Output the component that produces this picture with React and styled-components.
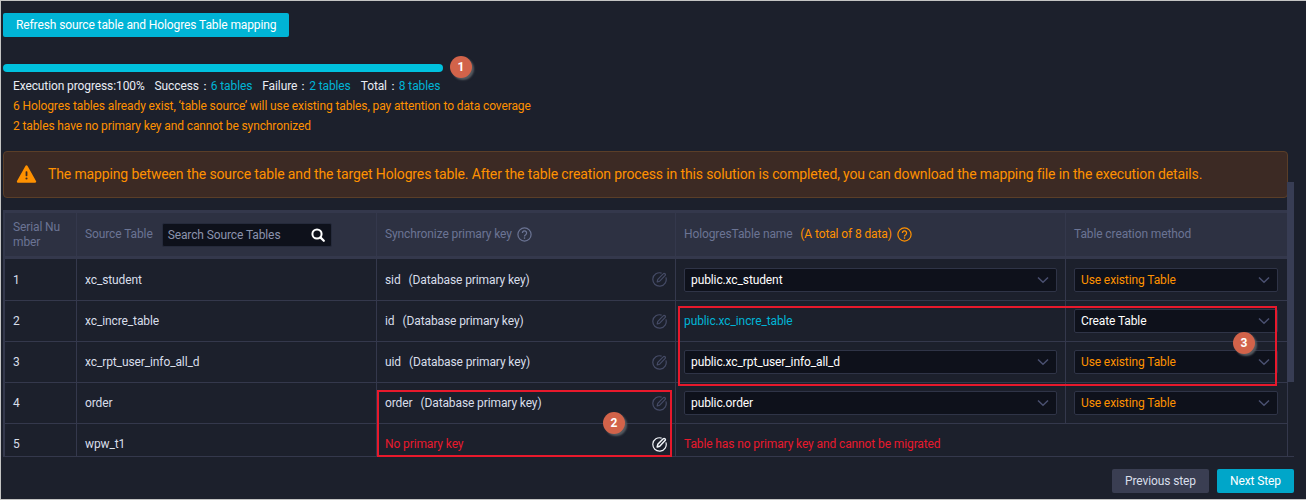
import React from "react";
import styled, { createGlobalStyle } from "styled-components";

const Global = createGlobalStyle`
  html, body { margin: 0; padding: 0; background: #1c202c; }
  * { box-sizing: border-box; }
`;

const Page = styled.div`
  position: relative;
  width: 1306px;
  height: 500px;
  overflow: hidden;
  background: #1c202c;
  border-left: 1px solid #c4c4c4;
  border-top: 1px solid #c4c4c4;
  border-bottom: 1px solid #c4c4c4;
  padding: 12px 12px 0 2px;
  font-family: Roboto, "Liberation Sans", sans-serif;
  font-size: 12px;
  letter-spacing: -0.11px;
  color: #d8deea;
`;

const PrimaryButton = styled.button`
  display: block;
  height: 24px;
  padding: 0 13px;
  border: 0;
  border-radius: 2px;
  background: #00b4d6;
  color: #fff;
  font: inherit;
  letter-spacing: inherit;
  white-space: nowrap;
`;

const Progress = styled.div`
  width: 440px;
  height: 8px;
  margin-top: 27px;
  border-radius: 4px;
  background: #00c1de;
`;

const Summary = styled.div`
  margin: 4px 0 0 10px;
  line-height: 20px;
`;

const Line = styled.div`
  display: flex;
  color: ${(p) => (p.$warn ? "#ff9100" : "#e8ecf4")};
`;

const Stat = styled.span`
  margin-right: 10px;
`;

const Count = styled.span`
  color: #00b4d6;
`;

const Alert = styled.div`
  display: flex;
  align-items: center;
  gap: 11px;
  height: 47px;
  width: 1285px;
  margin-top: 15px;
  padding: 0 0 2px 12px;
  border: 1px solid #5a3e28;
  border-radius: 4px;
  background: #3c2a24;
  color: #ff9100;
  font-size: 14px;
  letter-spacing: -0.135px;
`;

const TableWrap = styled.div`
  position: relative;
  width: 1291px;
  height: 247px;
  margin-top: 12px;
  overflow: hidden;
  border-bottom: 1px solid #34384c;
`;

const Table = styled.table`
  width: 1285px;
  table-layout: fixed;
  border-collapse: separate;
  border-spacing: 0;
`;

const HeadCell = styled.th`
  height: 49px;
  padding: 0 8px;
  background: #2d3142;
  border-right: 1px solid #34384c;
  border-top: 3px solid #34384c;
  border-bottom: 3px solid #34384c;
  color: #6b7494;
  font-weight: 400;
  text-align: left;
  line-height: 15px;
  &:first-child { padding: 0 8px; border-left: 2px solid #34384c; }
`;

const HeadInner = styled.div`
  display: flex;
  align-items: center;
  gap: ${(p) => p.$gap || 5}px;
`;

const Cell = styled.td`
  height: 41px;
  padding: 0 8px;
  border-right: 1px solid #34384c;
  border-bottom: 1px solid #34384c;
  &:first-child { padding: 0 8px; border-left: 2px solid #34384c; }
  &:last-child { padding-right: 9px; }
  tr:first-child > & { height: 42px; }
`;

const KeyCell = styled.div`
  display: flex;
  align-items: center;
  justify-content: space-between;
  color: ${(p) => (p.$error ? "#e8192c" : "inherit")};
`;

const KeyName = styled.span`
  margin-right: 8px;
`;

const KeyText = styled.span`
  white-space: pre;
`;

const Search = styled.div`
  display: flex;
  align-items: center;
  justify-content: space-between;
  width: 170px;
  height: 24px;
  margin: 1px 0 0 -1px;
  padding: 0 6px 0 5px;
  border: 1px solid #252a3b;
  border-radius: 2px;
  background: #0e111b;
  color: #8b93ad;
`;

const Select = styled.div`
  display: flex;
  align-items: center;
  justify-content: space-between;
  height: 24px;
  padding: 0 7px 0 6px;
  border: 1px solid #2f3447;
  border-radius: 2px;
  background: #0e111b;
  color: ${(p) => (p.$warn ? "#ff9100" : "#ffffff")};
`;

const TealText = styled.span`
  color: #00b4d6;
`;

const ErrorText = styled.span`
  color: #e8192c;
`;

const WarnHead = styled.span`
  color: #ff9100;
`;

const Scrollbar = styled.div`
  position: absolute;
  left: 1286px;
  top: 181px;
  width: 7px;
  height: 200px;
  background: #383d54;
`;

const Footer = styled.div`
  display: flex;
  justify-content: flex-end;
  gap: 8px;
  width: 1291px;
  margin-top: 12px;
`;

const FooterButton = styled.button`
  height: 24px;
  width: ${(p) => p.$w}px;
  border: 0;
  border-radius: 2px;
  background: ${(p) => (p.$primary ? "#00a6c9" : "#3a3e52")};
  color: ${(p) => (p.$primary ? "#fff" : "#d8deea")};
  font: inherit;
  letter-spacing: inherit;
`;

const Callout = styled.div`
  position: absolute;
  left: ${(p) => p.$l}px;
  top: ${(p) => p.$t}px;
  width: ${(p) => p.$w}px;
  height: ${(p) => p.$h}px;
  border: 2px solid #e8192c;
  pointer-events: none;
`;

const Badge = styled.div`
  position: absolute;
  left: ${(p) => p.$x - 11}px;
  top: ${(p) => p.$y - 11}px;
  width: 22px;
  height: 22px;
  display: flex;
  align-items: center;
  justify-content: center;
  border-radius: 50%;
  background: #d2634a;
  box-shadow: 2px 2px 2px #555a60;
  color: #fff;
  font-weight: 700;
  font-size: 12px;
`;

const ICON = { display: "block", flexShrink: 0 };

const Warning = () => (
  <svg width="21" height="18" viewBox="0 0 22 20" style={ICON}>
    <path d="M11 1.5 L20.5 18.5 H1.5 Z" fill="#ff9100" stroke="#ff9100" strokeWidth="2.4" strokeLinejoin="round" />
    <rect x="10" y="7" width="2" height="5.5" rx=".8" fill="#3c2a24" />
    <circle cx="11" cy="15" r="1.2" fill="#3c2a24" />
  </svg>
);

const SearchIcon = () => (
  <svg width="14" height="14" viewBox="0 0 14 14" style={ICON}>
    <circle cx="6" cy="6" r="4.6" fill="none" stroke="#fff" strokeWidth="2" />
    <path d="M9.4 9.4 L12.8 12.8" stroke="#fff" strokeWidth="2.2" strokeLinecap="round" />
  </svg>
);

const Help = ({ color }) => (
  <svg width="15" height="15" viewBox="0 0 15 15" style={ICON}>
    <circle cx="7.5" cy="7.5" r="6.6" fill="none" stroke={color} strokeWidth="1.2" />
    <path d="M5.4 5.9 a2.1 2.1 0 1 1 3.3 1.8 c-.8.5-1.2.9-1.2 1.7" fill="none" stroke={color} strokeWidth="1.3" />
    <circle cx="7.5" cy="11.1" r=".8" fill={color} />
  </svg>
);

const EditIcon = ({ active }) => {
  const c = active ? "#f2f5fa" : "#454b66";
  return (
    <svg width="15" height="15" viewBox="0 0 15 15" style={ICON}>
      <path d="M9.6 1.1 A6.7 6.7 0 1 0 13.9 5.4" fill="none" stroke={c} strokeWidth="1.2" />
      <path d="M5.2 10 L5.8 7.3 L11.2 1.8 a1.2 1.2 0 0 1 1.8 0 a1.2 1.2 0 0 1 0 1.8 L7.7 9.2 Z" fill="none" stroke={c} strokeWidth={active ? 1.5 : 1.2} strokeLinejoin="round" />
    </svg>
  );
};

const Chevron = () => (
  <svg width="12" height="8" viewBox="0 0 12 8" style={ICON}>
    <path d="M1 1.5 L6 6.3 L11 1.5" fill="none" stroke="#4a5070" strokeWidth="1.5" />
  </svg>
);

const Dropdown = ({ value, warn }) => (
  <Select $warn={warn}>
    <span>{value}</span>
    <Chevron />
  </Select>
);

const Key = ({ name }) => (
  <KeyCell>
    <KeyText><KeyName>{name}</KeyName>(Database primary key)</KeyText>
    <EditIcon />
  </KeyCell>
);

const rows = [
  { n: 1, src: "xc_student", key: "sid", target: "public.xc_student", method: "Use existing Table" },
  { n: 2, src: "xc_incre_table", key: "id", link: "public.xc_incre_table", method: "Create Table" },
  { n: 3, src: "xc_rpt_user_info_all_d", key: "uid", target: "public.xc_rpt_user_info_all_d", method: "Use existing Table" },
  { n: 4, src: "order", key: "order", target: "public.order", method: "Use existing Table" },
];

export default function App() {
  return (
    <Page>
      <Global />
      <PrimaryButton>Refresh source table and Hologres Table mapping</PrimaryButton>
      <Progress />
      <Summary>
        <Line>
          <Stat>Execution progress:100%</Stat>
          <Stat>Success：<Count>6 tables</Count></Stat>
          <Stat>Failure：<Count>2 tables</Count></Stat>
          <Stat>Total：<Count>8 tables</Count></Stat>
        </Line>
        <Line $warn>6 Hologres tables already exist, ‘table source’ will use existing tables, pay attention to data coverage</Line>
        <Line $warn>2 tables have no primary key and cannot be synchronized</Line>
      </Summary>
      <Alert>
        <Warning />
        <span>The mapping between the source table and the target Hologres table. After the table creation process in this solution is completed, you can download the mapping file in the execution details.</span>
      </Alert>
      <TableWrap>
        <Table>
          <colgroup>
            <col style={{ width: 74 }} />
            <col style={{ width: 300 }} />
            <col style={{ width: 299 }} />
            <col style={{ width: 390 }} />
            <col style={{ width: 222 }} />
          </colgroup>
          <thead>
            <tr>
              <HeadCell>Serial Nu<br />mber</HeadCell>
              <HeadCell>
                <HeadInner $gap={10}>
                  <span>Source Table</span>
                  <Search>
                    <span>Search Source Tables</span>
                    <SearchIcon />
                  </Search>
                </HeadInner>
              </HeadCell>
              <HeadCell>
                <HeadInner>
                  <span>Synchronize primary key</span>
                  <Help color="#6b7494" />
                </HeadInner>
              </HeadCell>
              <HeadCell>
                <HeadInner>
                  <span>HologresTable name</span>
                  <WarnHead>&nbsp;(A total of 8 data)</WarnHead>
                  <Help color="#ff9100" />
                </HeadInner>
              </HeadCell>
              <HeadCell>Table creation method</HeadCell>
            </tr>
          </thead>
          <tbody>
            {rows.map((r) => (
              <tr key={r.n}>
                <Cell>{r.n}</Cell>
                <Cell>{r.src}</Cell>
                <Cell><Key name={r.key} /></Cell>
                <Cell>
                  {r.link ? <TealText>{r.link}</TealText> : <Dropdown value={r.target} />}
                </Cell>
                <Cell><Dropdown value={r.method} warn={r.method !== "Create Table"} /></Cell>
              </tr>
            ))}
            <tr>
              <Cell>5</Cell>
              <Cell>wpw_t1</Cell>
              <Cell>
                <KeyCell $error>
                  <span>No primary key</span>
                  <EditIcon active />
                </KeyCell>
              </Cell>
              <Cell colSpan={2}><ErrorText>Table has no primary key and cannot be migrated</ErrorText></Cell>
            </tr>
          </tbody>
        </Table>
      </TableWrap>
      <Footer>
        <FooterButton $w={97}>Previous step</FooterButton>
        <FooterButton $w={77} $primary>Next Step</FooterButton>
      </Footer>
      <Scrollbar />
      <Callout $l={376} $t={389} $w={295} $h={67} />
      <Callout $l={677} $t={305} $w={599} $h={80} />
      <Badge $x={460} $y={66}>1</Badge>
      <Badge $x={613} $y={422}>2</Badge>
      <Badge $x={1243} $y={342}>3</Badge>
    </Page>
  );
}
